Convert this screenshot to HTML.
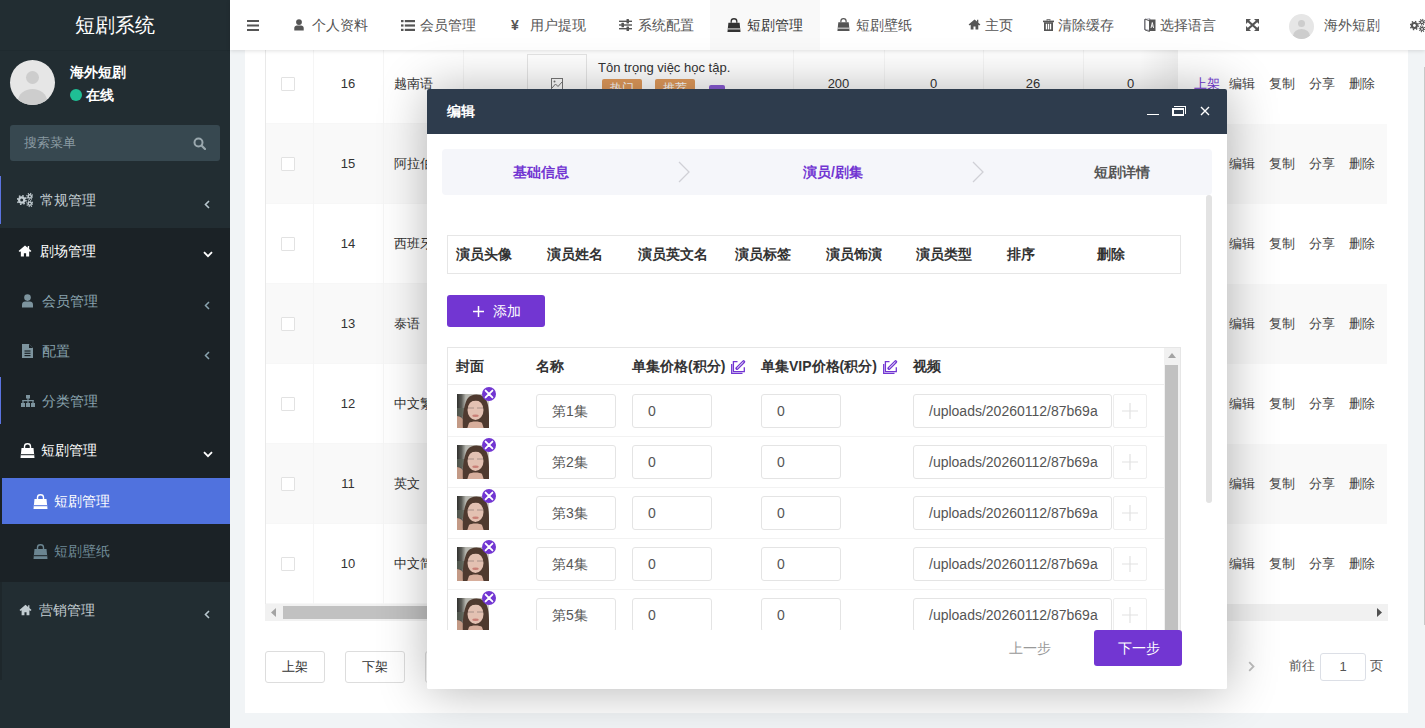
<!DOCTYPE html>
<html><head><meta charset="utf-8">
<style>
*{box-sizing:border-box;margin:0;padding:0}
html,body{width:1425px;height:728px;overflow:hidden}
body{position:relative;background:#f1f4f6;font-family:"Liberation Sans",sans-serif;font-size:13px;color:#333}
.a{position:absolute}
.t{position:absolute;white-space:nowrap;line-height:20px}
/* sidebar */
#sb{left:0;top:0;width:230px;height:728px;background:#222d32;overflow:hidden}
.mi{position:absolute;left:0;width:230px;height:48px}
.mt{position:absolute;white-space:nowrap;font-size:14px;line-height:20px}
.chev{position:absolute}
/* navbar */
#nb{left:230px;top:0;width:1195px;height:50px;background:#fff;box-shadow:0 1px 4px rgba(0,0,0,.12);z-index:5}
.nt{position:absolute;top:15px;font-size:14px;line-height:20px;color:#555;white-space:nowrap}
/* content */
#panel{left:245px;top:0;width:1163px;height:713px;background:#fff}
.row{position:absolute;left:265px;width:913px;height:80px}
.cb{position:absolute;width:14px;height:14px;border:1px solid #e2e2e2;border-radius:1px;background:#fff}
.vl{position:absolute;top:44px;height:560px;width:1px;background:#f5f5f5}
.cell{position:absolute;white-space:nowrap;line-height:20px;font-size:13px;color:#333}
.fx{position:absolute;left:1178px;width:209px;height:80px}
.op{position:absolute;white-space:nowrap;font-size:13px;line-height:20px;color:#444}
.btn{position:absolute;height:32px;border:1px solid #ddd;border-radius:3px;background:#fff;font-size:13px;line-height:30px;text-align:center;color:#333}
/* modal */
#md{left:427px;top:89px;width:800px;height:600px;background:#fff;box-shadow:1px 1px 50px rgba(0,0,0,.3);border-radius:2px;z-index:10;overflow:hidden}
#mh{left:0;top:0;width:800px;height:45px;background:#2e3c4d}
.hd{position:absolute;white-space:nowrap;font-size:14px;font-weight:bold;line-height:20px;color:#333}
.inp{position:absolute;height:34px;border:1px solid #e4e4e4;border-radius:3px;background:#fff;font-size:14px;line-height:32px;color:#555;padding-left:15px;white-space:nowrap;overflow:hidden}
.cov{position:absolute;width:32px;height:34px;overflow:hidden}
.xb{position:absolute;width:14px;height:14px;border-radius:50%;background:#7236d2}
</style></head><body>

<!-- SIDEBAR -->
<div id="sb" class="a">
  <div class="t" style="left:0;width:230px;top:13px;text-align:center;font-size:20px;line-height:24px;color:#fff">短剧系统</div>
  <div class="a" style="left:0;top:50px;width:230px;height:1px;background:#1f2a2f"></div>
  <div class="a" style="left:10px;top:60px;width:45px;height:45px;border-radius:50%;background:#e6e6e6;overflow:hidden">
    <div class="a" style="left:16px;top:11px;width:13px;height:13px;border-radius:50%;background:#cdcdcd"></div>
    <div class="a" style="left:8px;top:29px;width:29px;height:24px;border-radius:50%;background:#cdcdcd"></div>
  </div>
  <div class="t" style="left:70px;top:62px;font-size:14px;font-weight:bold;color:#fff">海外短剧</div>
  <div class="a" style="left:70px;top:89px;width:12px;height:12px;border-radius:50%;background:#1fbf95"></div>
  <div class="t" style="left:86px;top:85px;font-size:14px;font-weight:bold;color:#fff">在线</div>
  <div class="a" style="left:10px;top:125px;width:210px;height:36px;border-radius:3px;background:#374850"></div>
  <div class="t" style="left:24px;top:133px;font-size:13px;color:#8b9ba3">搜索菜单</div>
  <svg class="a" style="left:193px;top:137px" width="13" height="13" viewBox="0 0 13 13"><circle cx="5.5" cy="5.5" r="4" fill="none" stroke="#9aa8ae" stroke-width="2"/><line x1="8.5" y1="8.5" x2="12" y2="12" stroke="#9aa8ae" stroke-width="2.2" stroke-linecap="round"/></svg>

  <div class="a" style="left:0;top:176px;width:1px;height:48px;background:#5b73e0"></div>
  <svg class="a" style="left:17px;top:192px" width="16" height="16" viewBox="0 0 16 16"><g fill="#c2ccd1"><circle cx="4.7" cy="8" r="3.7"/><circle cx="12.8" cy="4.4" r="2.3"/><circle cx="12.8" cy="11.6" r="2.3"/></g><g stroke="#c2ccd1" fill="none"><circle cx="4.7" cy="8" r="4.3" stroke-width="1.6" stroke-dasharray="1.5 1.88"/><circle cx="12.8" cy="4.4" r="2.9" stroke-width="1.3" stroke-dasharray="1.1 1.17"/><circle cx="12.8" cy="11.6" r="2.9" stroke-width="1.3" stroke-dasharray="1.1 1.17"/></g><g fill="#222d32"><circle cx="4.7" cy="8" r="1.5"/><circle cx="12.8" cy="4.4" r="0.9"/><circle cx="12.8" cy="11.6" r="0.9"/></g></svg>
  <div class="mt" style="left:40px;top:190px;color:#c2ccd1">常规管理</div>
  <svg class="a" style="left:204px;top:200px" width="6" height="9" viewBox="0 0 6 9"><path d="M5 1L1.5 4.5L5 8" fill="none" stroke="#b8c7ce" stroke-width="1.6"/></svg>

  <div class="a" style="left:0;top:228px;width:230px;height:354px;background:#1b2226"></div>
  <svg class="a" style="left:18px;top:245px" width="14" height="12" viewBox="0 0 15 13"><path d="M7.5 0.5L0.5 6.5L2 7.6L3 6.8V12.5H6.3V9H8.7V12.5H12V6.8L13 7.6L14.5 6.5L12 4.3V1H10.5V3L7.5 0.5Z" fill="#fff"/></svg>
  <div class="mt" style="left:40px;top:241px;color:#fff">剧场管理</div>
  <svg class="a" style="left:203px;top:251px" width="10" height="7" viewBox="0 0 10 7"><path d="M1 1.2L5 5.2L9 1.2" fill="none" stroke="#fff" stroke-width="1.8"/></svg>

  <svg class="a" style="left:22px;top:294px" width="11" height="14" viewBox="0 0 11 14"><circle cx="5.5" cy="3.6" r="3.3" fill="#7d949e"/><path d="M0 13.5V10.5C0 8.6 1.5 7.6 3 7.6H8C9.5 7.6 11 8.6 11 10.5V13.5Z" fill="#7d949e"/></svg>
  <div class="mt" style="left:42px;top:291px;color:#8aa4af">会员管理</div>
  <svg class="a" style="left:204px;top:301px" width="6" height="9" viewBox="0 0 6 9"><path d="M5 1L1.5 4.5L5 8" fill="none" stroke="#8aa4af" stroke-width="1.5"/></svg>

  <svg class="a" style="left:22px;top:344px" width="11" height="14" viewBox="0 0 11 14"><path d="M0 0H7L11 4V14H0Z" fill="#7d949e"/><path d="M7 0V4H11" fill="#1b2226"/><g stroke="#1b2226" stroke-width="1.2"><line x1="2.5" y1="7" x2="8.5" y2="7"/><line x1="2.5" y1="9.3" x2="8.5" y2="9.3"/><line x1="2.5" y1="11.6" x2="8.5" y2="11.6"/></g></svg>
  <div class="mt" style="left:42px;top:341px;color:#8aa4af">配置</div>
  <svg class="a" style="left:204px;top:351px" width="6" height="9" viewBox="0 0 6 9"><path d="M5 1L1.5 4.5L5 8" fill="none" stroke="#8aa4af" stroke-width="1.5"/></svg>

  <div class="a" style="left:0;top:377px;width:1px;height:47px;background:#5b73e0"></div>
  <svg class="a" style="left:21px;top:395px" width="14" height="12" viewBox="0 0 14 12"><g fill="#7d949e"><rect x="5" y="0" width="4" height="3.5"/><rect x="0" y="8" width="4" height="4"/><rect x="5" y="8" width="4" height="4"/><rect x="10" y="8" width="4" height="4"/><rect x="6.4" y="3" width="1.2" height="5"/><rect x="1.4" y="5" width="11.2" height="1.2"/><rect x="1.4" y="5" width="1.2" height="3"/><rect x="11.4" y="5" width="1.2" height="3"/></g></svg>
  <div class="mt" style="left:42px;top:391px;color:#8aa4af">分类管理</div>

  <svg class="a" style="left:20px;top:443px" width="15" height="15" viewBox="0 0 15 15"><path d="M4.5 5V3.5C4.5 1.8 5.8 0.8 7.5 0.8S10.5 1.8 10.5 3.5V5" fill="none" stroke="#fff" stroke-width="1.4"/><path d="M1.5 5H13.5L14.5 15H0.5Z" fill="#fff"/><rect x="1" y="11.2" width="13" height="1" fill="#1b2226"/></svg>
  <div class="mt" style="left:41px;top:440px;color:#fff">短剧管理</div>
  <svg class="a" style="left:203px;top:451px" width="10" height="7" viewBox="0 0 10 7"><path d="M1 1.2L5 5.2L9 1.2" fill="none" stroke="#fff" stroke-width="1.8"/></svg>

  <div class="a" style="left:2px;top:478px;width:228px;height:46px;background:#5072de"></div>
  <svg class="a" style="left:33px;top:494px" width="15" height="15" viewBox="0 0 15 15"><path d="M4.5 5V3.5C4.5 1.8 5.8 0.8 7.5 0.8S10.5 1.8 10.5 3.5V5" fill="none" stroke="#fff" stroke-width="1.4"/><path d="M1.5 5H13.5L14.5 15H0.5Z" fill="#fff"/><rect x="1" y="11.2" width="13" height="1" fill="#5072de"/></svg>
  <div class="mt" style="left:54px;top:491px;color:#fff">短剧管理</div>

  <svg class="a" style="left:33px;top:544px" width="15" height="15" viewBox="0 0 15 15"><path d="M4.5 5V3.5C4.5 1.8 5.8 0.8 7.5 0.8S10.5 1.8 10.5 3.5V5" fill="none" stroke="#6b8591" stroke-width="1.4"/><path d="M1.5 5H13.5L14.5 15H0.5Z" fill="#6b8591"/><rect x="1" y="11.2" width="13" height="1" fill="#1b2226"/></svg>
  <div class="mt" style="left:54px;top:541px;color:#6f8a96">短剧壁纸</div>

  <div class="a" style="left:0;top:582px;width:2px;height:98px;background:#1e272b"></div>
  <svg class="a" style="left:19px;top:604px" width="13" height="12" viewBox="0 0 15 13"><path d="M7.5 0.5L0.5 6.5L2 7.6L3 6.8V12.5H6.3V9H8.7V12.5H12V6.8L13 7.6L14.5 6.5L12 4.3V1H10.5V3L7.5 0.5Z" fill="#c2ccd1"/></svg>
  <div class="mt" style="left:39px;top:600px;color:#c2ccd1">营销管理</div>
  <svg class="a" style="left:204px;top:610px" width="6" height="9" viewBox="0 0 6 9"><path d="M5 1L1.5 4.5L5 8" fill="none" stroke="#b8c7ce" stroke-width="1.6"/></svg>
</div>

<!-- NAVBAR -->
<div id="nb" class="a">
  <svg class="a" style="left:17px;top:20px" width="12" height="11" viewBox="0 0 12 11"><g fill="#555"><rect x="0" y="0" width="12" height="2"/><rect x="0" y="4.5" width="12" height="2"/><rect x="0" y="9" width="12" height="2"/></g></svg>
  <svg class="a" style="left:64px;top:19px" width="10" height="12" viewBox="0 0 11 14"><circle cx="5.5" cy="3.6" r="3.4" fill="#555"/><path d="M0 13.5V10.5C0 8.6 1.5 7.6 3 7.6H8C9.5 7.6 11 8.6 11 10.5V13.5Z" fill="#555"/></svg>
  <div class="nt" style="left:82px">个人资料</div>
  <svg class="a" style="left:171px;top:20px" width="14" height="11" viewBox="0 0 14 11"><g fill="#555"><rect x="0" y="0" width="2.5" height="2.2"/><rect x="0" y="4.4" width="2.5" height="2.2"/><rect x="0" y="8.8" width="2.5" height="2.2"/><rect x="3.8" y="0" width="10.2" height="2.2"/><rect x="3.8" y="4.4" width="10.2" height="2.2"/><rect x="3.8" y="8.8" width="10.2" height="2.2"/></g></svg>
  <div class="nt" style="left:190px">会员管理</div>
  <div class="nt" style="left:281px;font-weight:bold;color:#555">&yen;</div>
  <div class="nt" style="left:300px">用户提现</div>
  <svg class="a" style="left:389px;top:19px" width="13" height="12" viewBox="0 0 13 12"><g fill="#555"><rect x="0" y="1.6" width="13" height="1.4"/><rect x="0" y="5.3" width="13" height="1.4"/><rect x="0" y="9" width="13" height="1.4"/><rect x="7.5" y="0" width="2.5" height="4.5" rx=".5"/><rect x="2.5" y="3.8" width="2.5" height="4.5" rx=".5"/><rect x="7.5" y="7.5" width="2.5" height="4.5" rx=".5"/></g></svg>
  <div class="nt" style="left:408px">系统配置</div>
  <div class="a" style="left:480px;top:0;width:110px;height:50px;background:#f9f9f9"></div>
  <svg class="a" style="left:497px;top:18px" width="14" height="14" viewBox="0 0 15 15"><path d="M4.5 5V3.5C4.5 1.8 5.8 0.8 7.5 0.8S10.5 1.8 10.5 3.5V5" fill="none" stroke="#333" stroke-width="1.4"/><path d="M1.5 5H13.5L14.5 15H0.5Z" fill="#333"/><rect x="1" y="11.2" width="13" height="1" fill="#f9f9f9"/></svg>
  <div class="nt" style="left:517px;color:#333">短剧管理</div>
  <svg class="a" style="left:607px;top:18px" width="13" height="13" viewBox="0 0 15 15"><path d="M4.5 5V3.5C4.5 1.8 5.8 0.8 7.5 0.8S10.5 1.8 10.5 3.5V5" fill="none" stroke="#555" stroke-width="1.4"/><path d="M1.5 5H13.5L14.5 15H0.5Z" fill="#555"/><rect x="1" y="11.2" width="13" height="1" fill="#fff"/></svg>
  <div class="nt" style="left:626px">短剧壁纸</div>
  <svg class="a" style="left:738px;top:19px" width="13" height="11" viewBox="0 0 15 13"><path d="M7.5 0.5L0.5 6.5L2 7.6L3 6.8V12.5H6.3V9H8.7V12.5H12V6.8L13 7.6L14.5 6.5L12 4.3V1H10.5V3L7.5 0.5Z" fill="#555"/></svg>
  <div class="nt" style="left:755px">主页</div>
  <svg class="a" style="left:813px;top:19px" width="11" height="12" viewBox="0 0 11 12"><g fill="#555"><rect x="0" y="1.6" width="11" height="1.6"/><path d="M3.5 1.6V0.2H7.5V1.6H6.3V1H4.7V1.6Z"/><path d="M1 3.2H10V12H1Z"/></g><g fill="#fff"><rect x="2.8" y="4.8" width="1.3" height="5.6"/><rect x="4.85" y="4.8" width="1.3" height="5.6"/><rect x="6.9" y="4.8" width="1.3" height="5.6"/></g></svg>
  <div class="nt" style="left:828px">清除缓存</div>
  <svg class="a" style="left:914px;top:18px" width="12" height="14" viewBox="0 0 12 14"><path d="M0.5 1.5L6 0.8V12.5L0.5 11.5Z" fill="none" stroke="#9a9aa8" stroke-width="1"/><path d="M5 1.5H11.5V13H5Z" fill="#555"/><path d="M1 1L5.5 3V13.5L1 12Z" fill="none" stroke="#555" stroke-width=".9"/><path d="M7 10L8.3 4.5L9.6 10M7.6 8H9" fill="none" stroke="#fff" stroke-width=".9"/></svg>
  <div class="nt" style="left:930px">选择语言</div>
  <svg class="a" style="left:1016px;top:19px" width="13" height="12" viewBox="0 0 13 12"><g stroke="#555" stroke-width="2.3"><path d="M2 2L11 10M11 2L2 10"/></g><g fill="#555"><path d="M0 0H5L0 5Z"/><path d="M13 0H8L13 5Z"/><path d="M0 12H5L0 7Z"/><path d="M13 12H8L13 7Z"/></g></svg>
  <div class="a" style="left:1059px;top:14px;width:25px;height:25px;border-radius:50%;background:#e6e6e6;overflow:hidden">
    <div class="a" style="left:9px;top:6px;width:7px;height:7px;border-radius:50%;background:#cdcdcd"></div>
    <div class="a" style="left:4px;top:15px;width:17px;height:14px;border-radius:50%;background:#cdcdcd"></div>
  </div>
  <div class="nt" style="left:1094px">海外短剧</div>
  <svg class="a" style="left:1180px;top:18px" width="15" height="15" viewBox="0 0 16 16"><g fill="#555"><circle cx="4.7" cy="8" r="3.7"/><circle cx="12.8" cy="4.4" r="2.3"/><circle cx="12.8" cy="11.6" r="2.3"/></g><g stroke="#555" fill="none"><circle cx="4.7" cy="8" r="4.3" stroke-width="1.6" stroke-dasharray="1.5 1.88"/><circle cx="12.8" cy="4.4" r="2.9" stroke-width="1.3" stroke-dasharray="1.1 1.17"/><circle cx="12.8" cy="11.6" r="2.9" stroke-width="1.3" stroke-dasharray="1.1 1.17"/></g><g fill="#fff"><circle cx="4.7" cy="8" r="1.5"/><circle cx="12.8" cy="4.4" r="0.9"/><circle cx="12.8" cy="11.6" r="0.9"/></g></svg>
</div>

<!-- CONTENT PANEL -->
<div id="panel" class="a"></div>
<div class="row" style="top:44px;background:#fff"></div>
<div class="a" style="left:265px;top:123px;width:913px;height:1px;background:#f7f7f7"></div>
<div class="cb" style="left:281px;top:77px"></div>
<div class="cell" style="left:313px;width:70px;text-align:center;top:74px">16</div>
<div class="cell" style="left:394px;top:74px">越南语</div>
<div class="fx" style="top:44px;background:#fff"></div>
<div class="op" style="left:1194px;top:74px;color:#7236d2">上架</div>
<div class="op" style="left:1229px;top:74px">编辑</div>
<div class="op" style="left:1269px;top:74px">复制</div>
<div class="op" style="left:1309px;top:74px">分享</div>
<div class="op" style="left:1349px;top:74px">删除</div>
<div class="row" style="top:124px;background:#f9f9f9"></div>
<div class="a" style="left:265px;top:203px;width:913px;height:1px;background:#f7f7f7"></div>
<div class="cb" style="left:281px;top:157px"></div>
<div class="cell" style="left:313px;width:70px;text-align:center;top:154px">15</div>
<div class="cell" style="left:394px;top:154px">阿拉伯语</div>
<div class="fx" style="top:124px;background:#f9f9f9"></div>
<div class="op" style="left:1194px;top:154px;color:#7236d2">上架</div>
<div class="op" style="left:1229px;top:154px">编辑</div>
<div class="op" style="left:1269px;top:154px">复制</div>
<div class="op" style="left:1309px;top:154px">分享</div>
<div class="op" style="left:1349px;top:154px">删除</div>
<div class="row" style="top:204px;background:#fff"></div>
<div class="a" style="left:265px;top:283px;width:913px;height:1px;background:#f7f7f7"></div>
<div class="cb" style="left:281px;top:237px"></div>
<div class="cell" style="left:313px;width:70px;text-align:center;top:234px">14</div>
<div class="cell" style="left:394px;top:234px">西班牙语</div>
<div class="fx" style="top:204px;background:#fff"></div>
<div class="op" style="left:1194px;top:234px;color:#7236d2">上架</div>
<div class="op" style="left:1229px;top:234px">编辑</div>
<div class="op" style="left:1269px;top:234px">复制</div>
<div class="op" style="left:1309px;top:234px">分享</div>
<div class="op" style="left:1349px;top:234px">删除</div>
<div class="row" style="top:284px;background:#f9f9f9"></div>
<div class="a" style="left:265px;top:363px;width:913px;height:1px;background:#f7f7f7"></div>
<div class="cb" style="left:281px;top:317px"></div>
<div class="cell" style="left:313px;width:70px;text-align:center;top:314px">13</div>
<div class="cell" style="left:394px;top:314px">泰语</div>
<div class="fx" style="top:284px;background:#f9f9f9"></div>
<div class="op" style="left:1194px;top:314px;color:#7236d2">上架</div>
<div class="op" style="left:1229px;top:314px">编辑</div>
<div class="op" style="left:1269px;top:314px">复制</div>
<div class="op" style="left:1309px;top:314px">分享</div>
<div class="op" style="left:1349px;top:314px">删除</div>
<div class="row" style="top:364px;background:#fff"></div>
<div class="a" style="left:265px;top:443px;width:913px;height:1px;background:#f7f7f7"></div>
<div class="cb" style="left:281px;top:397px"></div>
<div class="cell" style="left:313px;width:70px;text-align:center;top:394px">12</div>
<div class="cell" style="left:394px;top:394px">中文繁体</div>
<div class="fx" style="top:364px;background:#fff"></div>
<div class="op" style="left:1194px;top:394px;color:#7236d2">上架</div>
<div class="op" style="left:1229px;top:394px">编辑</div>
<div class="op" style="left:1269px;top:394px">复制</div>
<div class="op" style="left:1309px;top:394px">分享</div>
<div class="op" style="left:1349px;top:394px">删除</div>
<div class="row" style="top:444px;background:#f9f9f9"></div>
<div class="a" style="left:265px;top:523px;width:913px;height:1px;background:#f7f7f7"></div>
<div class="cb" style="left:281px;top:477px"></div>
<div class="cell" style="left:313px;width:70px;text-align:center;top:474px">11</div>
<div class="cell" style="left:394px;top:474px">英文</div>
<div class="fx" style="top:444px;background:#f9f9f9"></div>
<div class="op" style="left:1194px;top:474px;color:#7236d2">上架</div>
<div class="op" style="left:1229px;top:474px">编辑</div>
<div class="op" style="left:1269px;top:474px">复制</div>
<div class="op" style="left:1309px;top:474px">分享</div>
<div class="op" style="left:1349px;top:474px">删除</div>
<div class="row" style="top:524px;background:#fff"></div>
<div class="a" style="left:265px;top:603px;width:913px;height:1px;background:#f7f7f7"></div>
<div class="cb" style="left:281px;top:557px"></div>
<div class="cell" style="left:313px;width:70px;text-align:center;top:554px">10</div>
<div class="cell" style="left:394px;top:554px">中文简体</div>
<div class="fx" style="top:524px;background:#fff"></div>
<div class="op" style="left:1194px;top:554px;color:#7236d2">上架</div>
<div class="op" style="left:1229px;top:554px">编辑</div>
<div class="op" style="left:1269px;top:554px">复制</div>
<div class="op" style="left:1309px;top:554px">分享</div>
<div class="op" style="left:1349px;top:554px">删除</div>
<div class="vl" style="left:313px"></div>
<div class="vl" style="left:383px"></div>
<div class="vl" style="left:463px"></div>
<div class="vl" style="left:793px"></div>
<div class="vl" style="left:884px"></div>
<div class="vl" style="left:983px"></div>
<div class="vl" style="left:1083px"></div>
<div class="a" style="left:265px;top:44px;width:1px;height:560px;background:#e9e9e9"></div>
<div class="a" style="left:527px;top:54px;width:60px;height:60px;border:1px solid #e5e5e5;background:#fff"></div>
<svg class="a" style="left:551px;top:78px" width="12" height="12" viewBox="0 0 12 12"><rect x=".5" y=".5" width="11" height="11" fill="none" stroke="#777"/><path d="M1 10L4.5 6L7 8.5L11 4" fill="none" stroke="#777"/><circle cx="3.5" cy="3.5" r="1" fill="#777"/></svg>
<div class="cell" style="left:598px;top:58px;font-size:13px">Tôn trọng việc học tập.</div>
<div class="a" style="left:602px;top:79px;width:40px;height:18px;border-radius:2px;background:#e29b5c;color:#fff;font-size:12px;line-height:18px;text-align:center">热门</div>
<div class="a" style="left:655px;top:79px;width:40px;height:18px;border-radius:2px;background:#e29b5c;color:#fff;font-size:12px;line-height:18px;text-align:center">推荐</div>
<div class="a" style="left:709px;top:85px;width:16px;height:12px;border-radius:2px;background:#8a5cd6"></div>
<div class="cell" style="left:793px;width:91px;text-align:center;top:74px">200</div>
<div class="cell" style="left:884px;width:99px;text-align:center;top:74px">0</div>
<div class="cell" style="left:983px;width:100px;text-align:center;top:74px">26</div>
<div class="cell" style="left:1083px;width:95px;text-align:center;top:74px">0</div>
<div class="a" style="left:1140px;top:44px;width:38px;height:560px;background:linear-gradient(to right,rgba(0,0,0,0),rgba(0,0,0,.06))"></div>
<div class="a" style="left:265px;top:604px;width:1123px;height:17px;background:#f1f1f1"></div>
<div class="a" style="left:283px;top:606px;width:900px;height:13px;background:#c1c1c1"></div>
<svg class="a" style="left:270px;top:608px" width="7" height="9" viewBox="0 0 7 9"><path d="M6 0V9L1 4.5Z" fill="#a3a3a3"/></svg>
<svg class="a" style="left:1376px;top:608px" width="7" height="9" viewBox="0 0 7 9"><path d="M1 0V9L6 4.5Z" fill="#505050"/></svg>
<div class="btn" style="left:265px;top:651px;width:60px">上架</div>
<div class="btn" style="left:345px;top:651px;width:60px">下架</div>
<div class="btn" style="left:425px;top:651px;width:60px"></div>
<svg class="a" style="left:1248px;top:661px" width="7" height="11" viewBox="0 0 7 11"><path d="M1.2 1.2L5.5 5.5L1.2 9.8" fill="none" stroke="#bdbdbd" stroke-width="1.8"/></svg>
<div class="cell" style="left:1289px;top:656px;font-size:13px;color:#555">前往</div>
<div class="a" style="left:1320px;top:653px;width:46px;height:28px;border:1px solid #dcdfe6;border-radius:3px;background:#fff;font-size:13px;line-height:26px;text-align:center;color:#555">1</div>
<div class="cell" style="left:1370px;top:656px;font-size:13px;color:#555">页</div>
<div class="a" style="left:1424px;top:67px;width:1px;height:558px;background:#c8c8c8"></div>

<!-- MODAL -->
<div id="md" class="a">
<div id="mh" class="a">
<div class="t" style="left:20px;top:12px;font-size:14px;font-weight:bold;color:#fff">编辑</div>
<div class="a" style="left:720px;top:25px;width:12px;height:1.3px;background:#fff"></div>
<div class="a" style="left:745px;top:19px;width:12px;height:8px;border-style:solid;border-color:#fff;border-width:2px 1px 2px 2px"></div><div class="a" style="left:747px;top:17px;width:12px;height:8px;border-style:solid;border-color:#fff;border-width:1px 1px 0 0"></div>
<svg class="a" style="left:773px;top:17px" width="10" height="10" viewBox="0 0 10 10"><path d="M1 1L9 9M9 1L1 9" stroke="#fff" stroke-width="1.4"/></svg>
</div>
<div class="a" style="left:15px;top:60px;width:770px;height:46px;background:#f5f6fa;border-radius:4px"></div>
<div class="hd" style="left:86px;top:73px;color:#7236d2">基础信息</div>
<svg class="a" style="left:251px;top:72px" width="12" height="22" viewBox="0 0 12 22"><path d="M1 1L11 11L1 21" fill="none" stroke="#d0d0d6" stroke-width="1.3"/></svg>
<div class="hd" style="left:376px;top:73px;color:#7236d2">演员/剧集</div>
<svg class="a" style="left:545px;top:72px" width="12" height="22" viewBox="0 0 12 22"><path d="M1 1L11 11L1 21" fill="none" stroke="#d0d0d6" stroke-width="1.3"/></svg>
<div class="hd" style="left:667px;top:73px;color:#555">短剧详情</div>
<div class="a" style="left:779px;top:106px;width:6px;height:308px;background:#e3e3e3;border-radius:3px"></div>
<div class="a" style="left:20px;top:146px;width:734px;height:39px;border:1px solid #e6e6e6"></div>
<div class="hd" style="left:29px;top:155px">演员头像</div>
<div class="hd" style="left:120px;top:155px">演员姓名</div>
<div class="hd" style="left:211px;top:155px">演员英文名</div>
<div class="hd" style="left:308px;top:155px">演员标签</div>
<div class="hd" style="left:399px;top:155px">演员饰演</div>
<div class="hd" style="left:489px;top:155px">演员类型</div>
<div class="hd" style="left:580px;top:155px">排序</div>
<div class="hd" style="left:670px;top:155px">删除</div>
<div class="a" style="left:20px;top:206px;width:98px;height:32px;background:#7236d2;border-radius:3px"></div>
<svg class="a" style="left:46px;top:217px" width="11" height="11" viewBox="0 0 11 11"><path d="M5.5 0V11M0 5.5H11" stroke="#fff" stroke-width="1.5"/></svg>
<div class="t" style="left:66px;top:212px;font-size:14px;color:#fff">添加</div>
<div class="a" style="left:20px;top:258px;width:734px;height:290px;border:1px solid #e6e6e6"></div>
<div class="a" style="left:21px;top:295px;width:716px;height:1px;background:#eee"></div>
<div class="hd" style="left:29px;top:267px">封面</div>
<div class="hd" style="left:109px;top:267px">名称</div>
<div class="hd" style="left:205px;top:267px">单集价格(积分)</div>
<div class="hd" style="left:334px;top:267px">单集VIP价格(积分)</div>
<div class="hd" style="left:486px;top:267px">视频</div>
<svg class="a" style="left:304px;top:271px" width="15" height="15" viewBox="0 0 15 15"><path d="M0.7 4V13.4H11.5" fill="none" stroke="#7236d2" stroke-width="1.3"/><path d="M6.5 1.6H2.4V11.7H13.3V7.2" fill="none" stroke="#7236d2" stroke-width="1.3"/><path d="M6 8.4L12.6 1.8" stroke="#7236d2" stroke-width="3.2" stroke-linecap="round"/><path d="M6.4 8L12.2 2.2" stroke="#fff" stroke-width="1" stroke-linecap="round"/></svg>
<svg class="a" style="left:456px;top:271px" width="15" height="15" viewBox="0 0 15 15"><path d="M0.7 4V13.4H11.5" fill="none" stroke="#7236d2" stroke-width="1.3"/><path d="M6.5 1.6H2.4V11.7H13.3V7.2" fill="none" stroke="#7236d2" stroke-width="1.3"/><path d="M6 8.4L12.6 1.8" stroke="#7236d2" stroke-width="3.2" stroke-linecap="round"/><path d="M6.4 8L12.2 2.2" stroke="#fff" stroke-width="1" stroke-linecap="round"/></svg>
<div class="a" style="left:21px;top:347px;width:716px;height:1px;background:#f2f2f2"></div>
<div class="cov" style="left:30px;top:305px"><svg width="32" height="34" viewBox="0 0 32 34" style="filter:blur(.35px)"><defs><linearGradient id="bgF1" x1="0" y1="0" x2="1" y2="0"><stop offset="0" stop-color="#1f1f1e"/><stop offset=".18" stop-color="#5a5a55"/><stop offset=".3" stop-color="#b5b5ae"/><stop offset="1" stop-color="#d9d5cf"/></linearGradient></defs>
<rect x="-2" y="-2" width="36" height="38" fill="url(#bgF1)"/>
<rect x="0" y="14" width="9" height="8" fill="#5d6458" opacity=".7"/>
<path d="M-1 22C3 22 6 24 7 28V35H-1Z" fill="#c39a86"/>
<path d="M6 35C5 24 7 9 11 4C14 0 22 -1 27 3C31 7 32 14 32 22V35Z" fill="#4f3a2f"/>
<ellipse cx="18.5" cy="16" rx="8" ry="10" fill="#e3c1b2"/>
<path d="M10 11C13 6.5 19 5.5 26 8.5L27 5C21 1 13 2 10 7Z" fill="#4f3a2f"/>
<path d="M11 14H17M20 14H26" stroke="#a08a84" stroke-width=".9"/>
<ellipse cx="18.5" cy="21.8" rx="3.2" ry="1.2" fill="#c98077"/>
<path d="M12 29C14 27 23 27 25 29L27 35H10Z" fill="#d7ae9c"/>
</svg></div>
<svg class="a" style="left:55px;top:298px" width="14" height="14" viewBox="0 0 14 14"><circle cx="7" cy="7" r="7" fill="#7236d2"/><path d="M3.6 3.6L10.4 10.4M10.4 3.6L3.6 10.4" stroke="#fff" stroke-width="1.9" stroke-linecap="round"/></svg>
<div class="inp" style="left:109px;top:305px;width:80px">第1集</div>
<div class="inp" style="left:205px;top:305px;width:80px">0</div>
<div class="inp" style="left:334px;top:305px;width:80px">0</div>
<div class="inp" style="left:486px;top:305px;width:199px">/uploads/20260112/87b69a</div>
<div class="a" style="left:686px;top:305px;width:34px;height:34px;border:1px solid #eee;border-radius:2px;background:#fff"></div>
<svg class="a" style="left:695px;top:314px" width="16" height="16" viewBox="0 0 16 16"><path d="M8 0V16M0 8H16" stroke="#e2e2e2" stroke-width="1.2"/></svg>
<div class="a" style="left:21px;top:398px;width:716px;height:1px;background:#f2f2f2"></div>
<div class="cov" style="left:30px;top:356px"><svg width="32" height="34" viewBox="0 0 32 34" style="filter:blur(.35px)"><defs><linearGradient id="bgF2" x1="0" y1="0" x2="1" y2="0"><stop offset="0" stop-color="#1f1f1e"/><stop offset=".18" stop-color="#5a5a55"/><stop offset=".3" stop-color="#b5b5ae"/><stop offset="1" stop-color="#d9d5cf"/></linearGradient></defs>
<rect x="-2" y="-2" width="36" height="38" fill="url(#bgF2)"/>
<rect x="0" y="14" width="9" height="8" fill="#5d6458" opacity=".7"/>
<path d="M-1 22C3 22 6 24 7 28V35H-1Z" fill="#c39a86"/>
<path d="M6 35C5 24 7 9 11 4C14 0 22 -1 27 3C31 7 32 14 32 22V35Z" fill="#4f3a2f"/>
<ellipse cx="18.5" cy="16" rx="8" ry="10" fill="#e3c1b2"/>
<path d="M10 11C13 6.5 19 5.5 26 8.5L27 5C21 1 13 2 10 7Z" fill="#4f3a2f"/>
<path d="M11 14H17M20 14H26" stroke="#a08a84" stroke-width=".9"/>
<ellipse cx="18.5" cy="21.8" rx="3.2" ry="1.2" fill="#c98077"/>
<path d="M12 29C14 27 23 27 25 29L27 35H10Z" fill="#d7ae9c"/>
</svg></div>
<svg class="a" style="left:55px;top:349px" width="14" height="14" viewBox="0 0 14 14"><circle cx="7" cy="7" r="7" fill="#7236d2"/><path d="M3.6 3.6L10.4 10.4M10.4 3.6L3.6 10.4" stroke="#fff" stroke-width="1.9" stroke-linecap="round"/></svg>
<div class="inp" style="left:109px;top:356px;width:80px">第2集</div>
<div class="inp" style="left:205px;top:356px;width:80px">0</div>
<div class="inp" style="left:334px;top:356px;width:80px">0</div>
<div class="inp" style="left:486px;top:356px;width:199px">/uploads/20260112/87b69a</div>
<div class="a" style="left:686px;top:356px;width:34px;height:34px;border:1px solid #eee;border-radius:2px;background:#fff"></div>
<svg class="a" style="left:695px;top:365px" width="16" height="16" viewBox="0 0 16 16"><path d="M8 0V16M0 8H16" stroke="#e2e2e2" stroke-width="1.2"/></svg>
<div class="a" style="left:21px;top:449px;width:716px;height:1px;background:#f2f2f2"></div>
<div class="cov" style="left:30px;top:407px"><svg width="32" height="34" viewBox="0 0 32 34" style="filter:blur(.35px)"><defs><linearGradient id="bgF3" x1="0" y1="0" x2="1" y2="0"><stop offset="0" stop-color="#1f1f1e"/><stop offset=".18" stop-color="#5a5a55"/><stop offset=".3" stop-color="#b5b5ae"/><stop offset="1" stop-color="#d9d5cf"/></linearGradient></defs>
<rect x="-2" y="-2" width="36" height="38" fill="url(#bgF3)"/>
<rect x="0" y="14" width="9" height="8" fill="#5d6458" opacity=".7"/>
<path d="M-1 22C3 22 6 24 7 28V35H-1Z" fill="#c39a86"/>
<path d="M6 35C5 24 7 9 11 4C14 0 22 -1 27 3C31 7 32 14 32 22V35Z" fill="#4f3a2f"/>
<ellipse cx="18.5" cy="16" rx="8" ry="10" fill="#e3c1b2"/>
<path d="M10 11C13 6.5 19 5.5 26 8.5L27 5C21 1 13 2 10 7Z" fill="#4f3a2f"/>
<path d="M11 14H17M20 14H26" stroke="#a08a84" stroke-width=".9"/>
<ellipse cx="18.5" cy="21.8" rx="3.2" ry="1.2" fill="#c98077"/>
<path d="M12 29C14 27 23 27 25 29L27 35H10Z" fill="#d7ae9c"/>
</svg></div>
<svg class="a" style="left:55px;top:400px" width="14" height="14" viewBox="0 0 14 14"><circle cx="7" cy="7" r="7" fill="#7236d2"/><path d="M3.6 3.6L10.4 10.4M10.4 3.6L3.6 10.4" stroke="#fff" stroke-width="1.9" stroke-linecap="round"/></svg>
<div class="inp" style="left:109px;top:407px;width:80px">第3集</div>
<div class="inp" style="left:205px;top:407px;width:80px">0</div>
<div class="inp" style="left:334px;top:407px;width:80px">0</div>
<div class="inp" style="left:486px;top:407px;width:199px">/uploads/20260112/87b69a</div>
<div class="a" style="left:686px;top:407px;width:34px;height:34px;border:1px solid #eee;border-radius:2px;background:#fff"></div>
<svg class="a" style="left:695px;top:416px" width="16" height="16" viewBox="0 0 16 16"><path d="M8 0V16M0 8H16" stroke="#e2e2e2" stroke-width="1.2"/></svg>
<div class="a" style="left:21px;top:500px;width:716px;height:1px;background:#f2f2f2"></div>
<div class="cov" style="left:30px;top:458px"><svg width="32" height="34" viewBox="0 0 32 34" style="filter:blur(.35px)"><defs><linearGradient id="bgF4" x1="0" y1="0" x2="1" y2="0"><stop offset="0" stop-color="#1f1f1e"/><stop offset=".18" stop-color="#5a5a55"/><stop offset=".3" stop-color="#b5b5ae"/><stop offset="1" stop-color="#d9d5cf"/></linearGradient></defs>
<rect x="-2" y="-2" width="36" height="38" fill="url(#bgF4)"/>
<rect x="0" y="14" width="9" height="8" fill="#5d6458" opacity=".7"/>
<path d="M-1 22C3 22 6 24 7 28V35H-1Z" fill="#c39a86"/>
<path d="M6 35C5 24 7 9 11 4C14 0 22 -1 27 3C31 7 32 14 32 22V35Z" fill="#4f3a2f"/>
<ellipse cx="18.5" cy="16" rx="8" ry="10" fill="#e3c1b2"/>
<path d="M10 11C13 6.5 19 5.5 26 8.5L27 5C21 1 13 2 10 7Z" fill="#4f3a2f"/>
<path d="M11 14H17M20 14H26" stroke="#a08a84" stroke-width=".9"/>
<ellipse cx="18.5" cy="21.8" rx="3.2" ry="1.2" fill="#c98077"/>
<path d="M12 29C14 27 23 27 25 29L27 35H10Z" fill="#d7ae9c"/>
</svg></div>
<svg class="a" style="left:55px;top:451px" width="14" height="14" viewBox="0 0 14 14"><circle cx="7" cy="7" r="7" fill="#7236d2"/><path d="M3.6 3.6L10.4 10.4M10.4 3.6L3.6 10.4" stroke="#fff" stroke-width="1.9" stroke-linecap="round"/></svg>
<div class="inp" style="left:109px;top:458px;width:80px">第4集</div>
<div class="inp" style="left:205px;top:458px;width:80px">0</div>
<div class="inp" style="left:334px;top:458px;width:80px">0</div>
<div class="inp" style="left:486px;top:458px;width:199px">/uploads/20260112/87b69a</div>
<div class="a" style="left:686px;top:458px;width:34px;height:34px;border:1px solid #eee;border-radius:2px;background:#fff"></div>
<svg class="a" style="left:695px;top:467px" width="16" height="16" viewBox="0 0 16 16"><path d="M8 0V16M0 8H16" stroke="#e2e2e2" stroke-width="1.2"/></svg>
<div class="cov" style="left:30px;top:509px"><svg width="32" height="34" viewBox="0 0 32 34" style="filter:blur(.35px)"><defs><linearGradient id="bgF5" x1="0" y1="0" x2="1" y2="0"><stop offset="0" stop-color="#1f1f1e"/><stop offset=".18" stop-color="#5a5a55"/><stop offset=".3" stop-color="#b5b5ae"/><stop offset="1" stop-color="#d9d5cf"/></linearGradient></defs>
<rect x="-2" y="-2" width="36" height="38" fill="url(#bgF5)"/>
<rect x="0" y="14" width="9" height="8" fill="#5d6458" opacity=".7"/>
<path d="M-1 22C3 22 6 24 7 28V35H-1Z" fill="#c39a86"/>
<path d="M6 35C5 24 7 9 11 4C14 0 22 -1 27 3C31 7 32 14 32 22V35Z" fill="#4f3a2f"/>
<ellipse cx="18.5" cy="16" rx="8" ry="10" fill="#e3c1b2"/>
<path d="M10 11C13 6.5 19 5.5 26 8.5L27 5C21 1 13 2 10 7Z" fill="#4f3a2f"/>
<path d="M11 14H17M20 14H26" stroke="#a08a84" stroke-width=".9"/>
<ellipse cx="18.5" cy="21.8" rx="3.2" ry="1.2" fill="#c98077"/>
<path d="M12 29C14 27 23 27 25 29L27 35H10Z" fill="#d7ae9c"/>
</svg></div>
<svg class="a" style="left:55px;top:502px" width="14" height="14" viewBox="0 0 14 14"><circle cx="7" cy="7" r="7" fill="#7236d2"/><path d="M3.6 3.6L10.4 10.4M10.4 3.6L3.6 10.4" stroke="#fff" stroke-width="1.9" stroke-linecap="round"/></svg>
<div class="inp" style="left:109px;top:509px;width:80px">第5集</div>
<div class="inp" style="left:205px;top:509px;width:80px">0</div>
<div class="inp" style="left:334px;top:509px;width:80px">0</div>
<div class="inp" style="left:486px;top:509px;width:199px">/uploads/20260112/87b69a</div>
<div class="a" style="left:686px;top:509px;width:34px;height:34px;border:1px solid #eee;border-radius:2px;background:#fff"></div>
<svg class="a" style="left:695px;top:518px" width="16" height="16" viewBox="0 0 16 16"><path d="M8 0V16M0 8H16" stroke="#e2e2e2" stroke-width="1.2"/></svg>
<div class="a" style="left:737px;top:259px;width:16px;height:282px;background:#f1f1f1"></div>
<svg class="a" style="left:741px;top:264px" width="8" height="5" viewBox="0 0 8 5"><path d="M0 5H8L4 0Z" fill="#a3a3a3"/></svg>
<div class="a" style="left:738px;top:276px;width:13px;height:265px;background:#c1c1c1"></div>
<div class="a" style="left:0;top:541px;width:800px;height:59px;background:#fff"></div>
<div class="t" style="left:582px;top:549px;font-size:14px;color:#999">上一步</div>
<div class="a" style="left:667px;top:541px;width:88px;height:36px;background:#7236d2;border-radius:3px"></div>
<div class="t" style="left:691px;top:549px;font-size:14px;color:#fff">下一步</div>
</div>

</body></html>
